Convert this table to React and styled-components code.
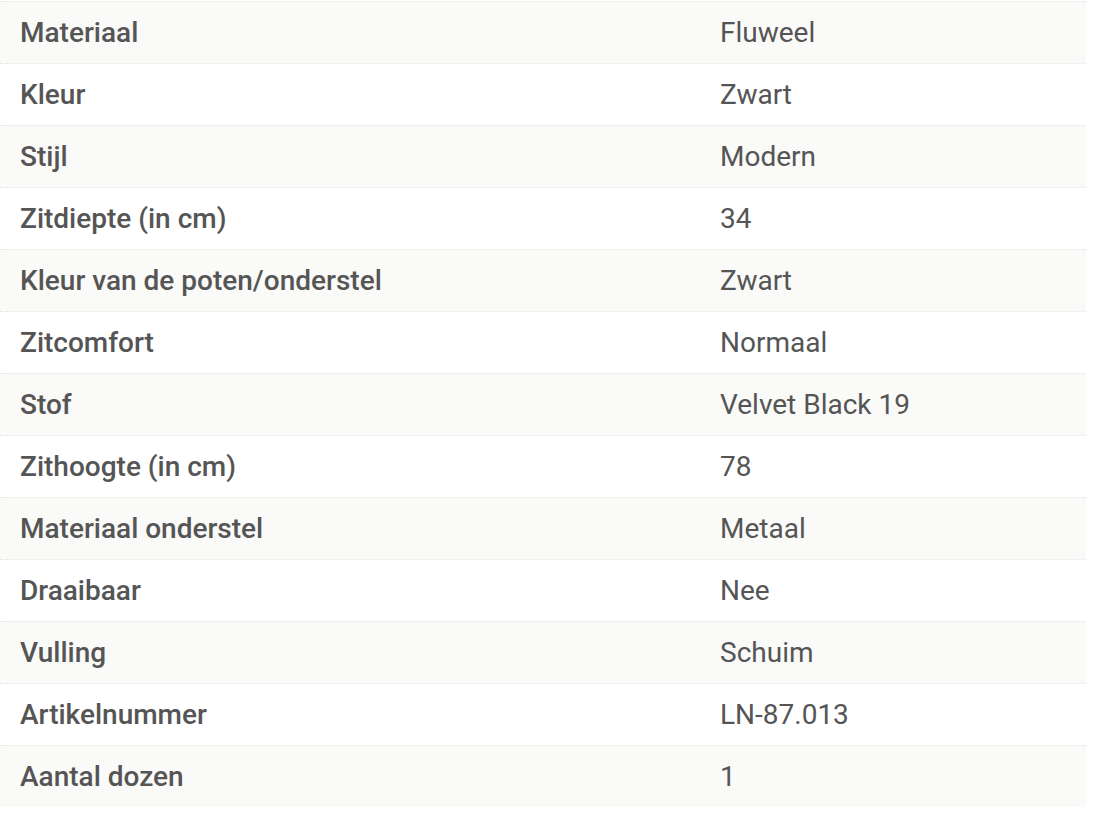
import React from "react";
import styled, { createGlobalStyle } from "styled-components";

const GlobalStyle = createGlobalStyle`
  body {
    margin: 0;
    background: #ffffff;
    font-family: Roboto, "Noto Sans", "Liberation Sans", sans-serif;
  }
`;

const SpecsTable = styled.div`
  width: 1086px;
  padding-top: 1px;
  display: flex;
  flex-direction: column;
`;

const SpecRow = styled.div`
  display: grid;
  grid-template-columns: 700px 1fr;
  align-items: center;
  height: 61px;
  border-top: 1px dotted #e2e2e0;
  background: ${(props) => (props.shaded ? "#fafaf8" : "#ffffff")};
`;

const SpecLabel = styled.div`
  padding-left: 20px;
  font-size: 28px;
  font-weight: 500;
  color: #555555;
`;

const SpecValue = styled.div`
  padding-left: 20px;
  font-size: 28px;
  font-weight: 400;
  color: #555555;
`;

const specs = [
  ["Materiaal", "Fluweel"],
  ["Kleur", "Zwart"],
  ["Stijl", "Modern"],
  ["Zitdiepte (in cm)", "34"],
  ["Kleur van de poten/onderstel", "Zwart"],
  ["Zitcomfort", "Normaal"],
  ["Stof", "Velvet Black 19"],
  ["Zithoogte (in cm)", "78"],
  ["Materiaal onderstel", "Metaal"],
  ["Draaibaar", "Nee"],
  ["Vulling", "Schuim"],
  ["Artikelnummer", "LN-87.013"],
  ["Aantal dozen", "1"],
];

const App = () => {
  return (
    <>
      <GlobalStyle />
      <SpecsTable>
        {specs.map(([label, value], index) => (
          <SpecRow key={label} shaded={index % 2 === 0}>
            <SpecLabel>{label}</SpecLabel>
            <SpecValue>{value}</SpecValue>
          </SpecRow>
        ))}
      </SpecsTable>
    </>
  );
};

export default App;
